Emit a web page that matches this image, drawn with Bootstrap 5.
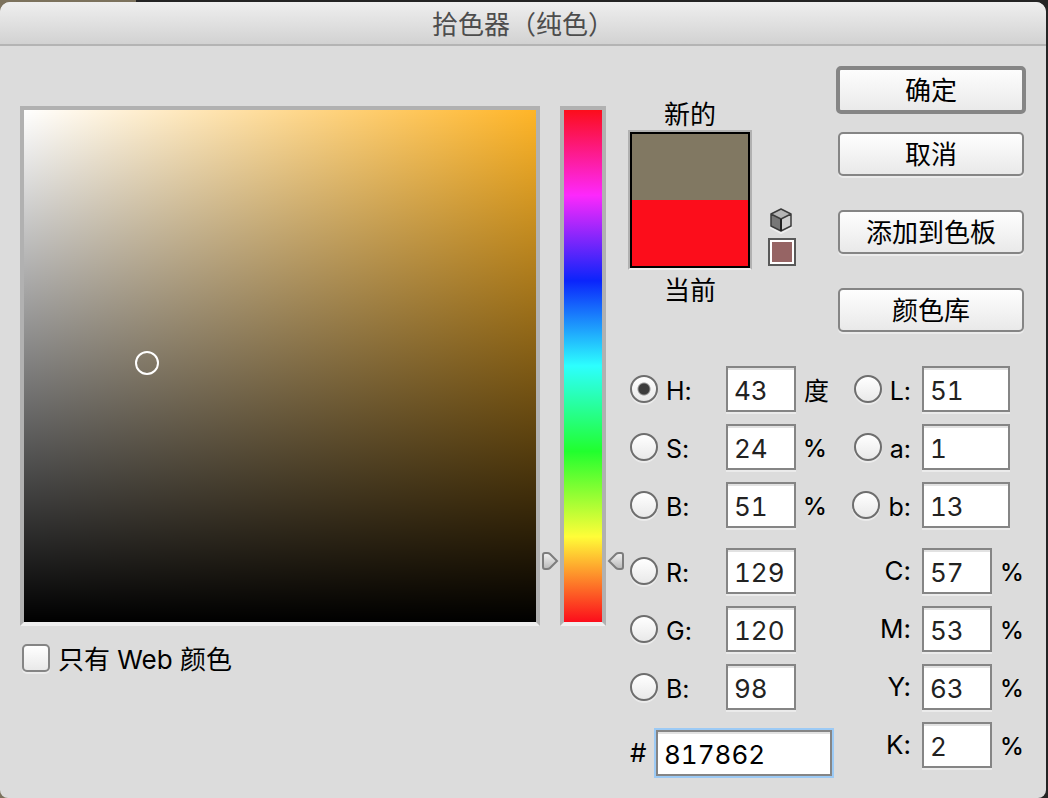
<!DOCTYPE html>
<html lang="zh-CN">
<head>
<meta charset="utf-8">
<meta name="viewport" content="width=device-width, initial-scale=1">
<title>拾色器（纯色）</title>
<link href="https://cdn.jsdelivr.net/npm/bootstrap@5.3.0/dist/css/bootstrap.min.css" rel="stylesheet">
<style>
  body {
    font-family: Inter, "Noto Sans CJK SC", sans-serif;
    font-size: 26px;
    line-height: 32px;
    font-variant-ligatures: no-contextual;
    color: #000;
    padding: 2px 2px 0 0;
    background: linear-gradient(90deg, #7c725d 136px, #242424 136px) fixed;
  }
  .dialog { background: #dcdcdc; border-radius: 10px 10px 8px 8px; overflow: hidden; }
  .titlebar {
    height: 44px;
    padding-top: 4px;
    color: #4d4d4d;
    background: linear-gradient(#efefef, #d2d2d2);
    border-bottom: 2px solid #b4b4b4;
  }
  .workspace { padding: 20px; gap: 22px; }
  .picker { padding-top: 40px; min-width: 300px; }
  .picker-tools { gap: 20px; }
  .well { border: 4px solid #b1b1b1; border-bottom-color: #efefef; }
  .tone-field {
    aspect-ratio: 1;
    background: linear-gradient(transparent, #000), linear-gradient(90deg, #fff, #ffb527);
    flex: 1 1 0;
  }
  .tone-marker { width: 24px; height: 24px; border: 2px solid #fff; border-radius: 50%; }
  .hue-strip {
    width: 46px;
    background: linear-gradient(#fc0d1b, #fd28fc, #0b24fb, #2dfffe, #21ff2e, #fffd38, #fc0d1b);
  }
  .hue-arrow { width: 18px; height: 20px; }
  .hue-arrow-left { left: -14px; }
  .hue-arrow-right { left: 52px; }
  .side { width: 398px; }
  .preview-column { width: 124px; padding-top: 32px; }
  .preview-name { padding-top: 1px; height: 32px; }
  .preview { height: 140px; border: 2px solid #b1b1b1; border-bottom-color: #efefef; }
  .preview-inner { border: 2px solid #000; }
  .swatch-new { background: #817862; }
  .swatch-current { background: #fc0d1b; }
  .warning-column { padding: 142px 0 0 16px; }
  .websafe {
    width: 28px; height: 28px; padding: 0;
    border: 2px solid #595959; background: #966464; box-shadow: inset 0 0 0 2px #fff;
  }
  .actions { width: 190px; gap: 34px; }
  .action-group { gap: 18px; }
  .action {
    --bs-btn-color: #000;
    --bs-btn-font-size: 26px;
    --bs-btn-line-height: 32px;
    --bs-btn-padding-y: 4px;
    --bs-btn-padding-x: 4px;
    --bs-btn-border-width: 2px;
    --bs-btn-border-color: #858585;
    --bs-btn-border-radius: 5px;
    height: 44px;
    margin: 0 2px;
    padding-bottom: 2px;
    background: linear-gradient(#fff, #e8e8e8) border-box;
    box-shadow: 0 2px 0 #ebebeb;
  }
  .action-default { --bs-btn-border-width: 4px; height: 48px; margin: 0; box-shadow: none; }
  .values { padding-top: 34px; gap: 20px; }
  .value-sets { gap: 20px; }
  .value-set { gap: 12px; }
  .value-row { height: 46px; }
  .left-values { width: 204px; padding-left: 2px; }
  .right-values { width: 174px; }
  .form-check-input.pick {
    width: 28px; height: 28px; margin: 0; flex: none; float: none;
    border: 2px solid #6e6e6e;
    background: linear-gradient(#fff, #e9e9e9);
    box-shadow: 0 2px 0 #ebebeb;
  }
  .form-check-input.pick:checked[type=radio] {
    background: radial-gradient(circle, #3d3d3d 5px, transparent 7px) border-box, linear-gradient(#fff, #e9e9e9);
  }
  .form-check-input.pick[type=checkbox] { border-color: #858585; border-radius: 5px; }
  .name-left { width: 60px; }
  .name-right { width: 70px; padding-right: 11px; gap: 8px; }
  .value-name { padding-top: 4px; }
  .value-box.form-control {
    width: 70px; height: 46px; flex: none;
    padding: 2px 0 0 6px;
    font-size: 26px; line-height: 32px;
    font-variant-numeric: tabular-nums;
    color: #222;
    border: 2px solid #858585; border-radius: 0;
    box-shadow: inset 0 2px 0 #e2e2e2, 0 2px 0 #ebebeb;
  }
  .value-box.wide { width: 88px; }
  .value-box.hex { width: 176px; color: #000; box-shadow: inset 0 2px 0 #e2e2e2, 0 0 0 2px #9ccaf5; }
  .value-name, .unit { font-size: 25px; }
  .unit { padding-top: 3px; margin-left: 8px; }
  .percent { margin-left: 7px; font-size: 24px; font-weight: 500; }
  .web-only { padding: 18px 0 0 2px; gap: 8px; }
</style>
</head>
<body class="d-flex flex-column min-vh-100">
<main class="dialog flex-fill">
  <header class="titlebar d-flex align-items-center justify-content-center">拾色器（纯色）</header>
  <form class="workspace d-flex">
    <section class="picker flex-fill">
      <div class="picker-tools d-flex">
        <div class="tone-field well position-relative">
          <div class="tone-marker position-absolute translate-middle" style="left:24%;top:49.4%"></div>
        </div>
        <div class="hue-strip well position-relative">
          <svg class="hue-arrow hue-arrow-left position-absolute translate-middle" style="top:88%" viewBox="0 0 18 20">
            <defs><linearGradient id="knob" x1="0" y1="0" x2="0" y2="1"><stop offset="0" stop-color="#f4f4f4"/><stop offset="1" stop-color="#b8b8b8"/></linearGradient></defs>
            <path d="M4 2H6Q8 2 9 3L16 10L9 17Q8 18 6 18H4Q2 18 2 16V4Q2 2 4 2Z" fill="url(#knob)" stroke="#7d7d7d" stroke-width="2"/>
          </svg>
          <svg class="hue-arrow hue-arrow-right position-absolute translate-middle" style="top:88%" viewBox="0 0 18 20">
            <path d="M14 2H12Q10 2 9 3L2 10L9 17Q10 18 12 18H14Q16 18 16 16V4Q16 2 14 2Z" fill="url(#knob)" stroke="#7d7d7d" stroke-width="2"/>
          </svg>
        </div>
      </div>
      <div class="web-only d-flex align-items-start">
        <input class="form-check-input pick" type="checkbox" id="web">
        <label for="web">只有 Web 颜色</label>
      </div>
    </section>

    <section class="side flex-shrink-0">
      <div class="d-flex">
        <div class="preview-column text-center">
          <div class="preview-name">新的</div>
          <div class="preview">
            <div class="preview-inner h-100 d-flex flex-column">
              <div class="swatch-new flex-fill"></div>
              <div class="swatch-current flex-fill"></div>
            </div>
          </div>
          <div class="preview-name mt-1">当前</div>
        </div>
        <div class="warning-column d-flex flex-column">
          <svg class="mb-1" width="26" height="26" viewBox="0 0 26 26" stroke-linejoin="round">
            <path d="M2 19L13 25L24 19" fill="none" stroke="#eee" stroke-width="2"/>
            <path d="M13 1L23 6L13 11L3 6Z" fill="#b5b5b5"/>
            <path d="M3 6L13 11V23L3 18Z" fill="#777"/>
            <path d="M23 6L13 11V23L23 18Z" fill="#cfcfcf"/>
            <path d="M3 6L13 1L23 6V18L13 23L3 18ZL13 11L23 6" fill="none" stroke="#3c3c3c" stroke-width="1.5"/>
            <path d="M13 11V23" stroke="#222" stroke-width="2"/>
          </svg>
          <button class="websafe" type="button" aria-label="Web 安全颜色"></button>
        </div>
        <div class="actions ms-auto d-flex flex-column">
          <div class="action-group d-flex flex-column">
            <button class="btn action action-default" type="button">确定</button>
            <button class="btn action" type="button">取消</button>
          </div>
          <button class="btn action" type="button">添加到色板</button>
          <button class="btn action" type="button">颜色库</button>
        </div>
      </div>

      <div class="values d-flex">
        <div class="left-values value-sets d-flex flex-column">
          <div class="value-set d-flex flex-column">
            <div class="value-row d-flex align-items-center"><input class="form-check-input pick me-2" type="radio" name="axis" id="rh" checked><label class="name-left value-name" for="rh">H:</label><input class="form-control value-box" value="43" aria-label="H"><span class="unit">度</span></div>
            <div class="value-row d-flex align-items-center"><input class="form-check-input pick me-2" type="radio" name="axis" id="rs"><label class="name-left value-name" for="rs">S:</label><input class="form-control value-box" value="24" aria-label="S"><span class="unit percent">%</span></div>
            <div class="value-row d-flex align-items-center"><input class="form-check-input pick me-2" type="radio" name="axis" id="rv"><label class="name-left value-name" for="rv">B:</label><input class="form-control value-box" value="51" aria-label="B"><span class="unit percent">%</span></div>
          </div>
          <div class="value-set d-flex flex-column">
            <div class="value-row d-flex align-items-center"><input class="form-check-input pick me-2" type="radio" name="axis" id="rr"><label class="name-left value-name" for="rr">R:</label><input class="form-control value-box" value="129" aria-label="R"></div>
            <div class="value-row d-flex align-items-center"><input class="form-check-input pick me-2" type="radio" name="axis" id="rg"><label class="name-left value-name" for="rg">G:</label><input class="form-control value-box" value="120" aria-label="G"></div>
            <div class="value-row d-flex align-items-center"><input class="form-check-input pick me-2" type="radio" name="axis" id="rb"><label class="name-left value-name" for="rb">B:</label><input class="form-control value-box" value="98" aria-label="B"></div>
          </div>
          <div class="value-row d-flex align-items-center justify-content-between"><label for="hex">#</label><input class="form-control value-box hex" id="hex" value="817862"></div>
        </div>

        <div class="right-values value-sets d-flex flex-column">
          <div class="value-set d-flex flex-column">
            <div class="value-row d-flex align-items-center"><div class="name-right d-flex align-items-center justify-content-end"><input class="form-check-input pick" type="radio" name="axis" id="rl"><label class="value-name" for="rl">L:</label></div><input class="form-control value-box wide" value="51" aria-label="L"></div>
            <div class="value-row d-flex align-items-center"><div class="name-right d-flex align-items-center justify-content-end"><input class="form-check-input pick" type="radio" name="axis" id="ra"><label class="value-name" for="ra">a:</label></div><input class="form-control value-box wide" value="1" aria-label="a"></div>
            <div class="value-row d-flex align-items-center"><div class="name-right d-flex align-items-center justify-content-end"><input class="form-check-input pick" type="radio" name="axis" id="rlb"><label class="value-name" for="rlb">b:</label></div><input class="form-control value-box wide" value="13" aria-label="b"></div>
          </div>
          <div class="value-set d-flex flex-column">
            <div class="value-row d-flex align-items-center"><label class="name-right text-end" for="vc">C:</label><input class="form-control value-box" id="vc" value="57"><span class="unit percent ms-2">%</span></div>
            <div class="value-row d-flex align-items-center"><label class="name-right text-end" for="vm">M:</label><input class="form-control value-box" id="vm" value="53"><span class="unit percent ms-2">%</span></div>
            <div class="value-row d-flex align-items-center"><label class="name-right text-end" for="vy">Y:</label><input class="form-control value-box" id="vy" value="63"><span class="unit percent ms-2">%</span></div>
            <div class="value-row d-flex align-items-center"><label class="name-right text-end" for="vk">K:</label><input class="form-control value-box" id="vk" value="2"><span class="unit percent ms-2">%</span></div>
          </div>
        </div>
      </div>
    </section>
  </form>
</main>
<script src="https://cdn.jsdelivr.net/npm/bootstrap@5.3.0/dist/js/bootstrap.bundle.min.js"></script>
</body>
</html>
